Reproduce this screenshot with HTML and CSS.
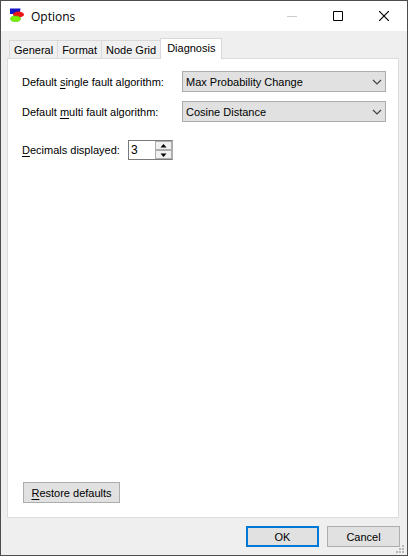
FILE: index.html
```html
<!DOCTYPE html>
<html lang="en">
<head>
<meta charset="UTF-8">
<meta name="viewport" content="width=device-width, initial-scale=1.0">
<title>Options</title>
<link rel="stylesheet" href="styles.css">
</head>
<body>
<div class="window">
    <header class="titlebar">
        <svg class="app-icon" width="16" height="16" viewBox="0 0 16 16">
            <path d="M1 .5H11.5L10.5 6H1Z" fill="#1616c4"/>
            <ellipse cx="9.5" cy="6.5" rx="5.5" ry="3" fill="#f01414"/>
            <ellipse cx="6.5" cy="10.8" rx="5" ry="2.8" fill="#7cf000" stroke="#4fc414" stroke-width=".6"/>
        </svg>
        <h1 class="title">Options</h1>
        <button class="win-btn" type="button" aria-label="Minimize" disabled>
            <svg width="10" height="10" viewBox="0 0 10 10"><path d="M0 5.5H10" stroke="#ccc"/></svg>
        </button>
        <button class="win-btn" type="button" aria-label="Maximize">
            <svg width="10" height="10" viewBox="0 0 10 10"><path d="M.5 .5H9.5V9.5H.5Z" fill="none" stroke="#000"/></svg>
        </button>
        <button class="win-btn" type="button" aria-label="Close">
            <svg width="10" height="10" viewBox="0 0 10 10"><path d="M0 0L10 10M10 0L0 10" stroke="#000" stroke-width="1.2"/></svg>
        </button>
    </header>

    <form class="content">
        <div class="tabs" role="tablist">
            <button class="tab" type="button" role="tab">General</button>
            <button class="tab" type="button" role="tab">Format</button>
            <button class="tab" type="button" role="tab">Node Grid</button>
            <button class="tab active" type="button" role="tab" aria-selected="true">Diagnosis</button>
        </div>

        <div class="panel" role="tabpanel">
            <div class="row">
                <label class="label" for="single">Default <u>s</u>ingle fault algorithm:</label>
                <div class="dropdown">
                    <select id="single">
                        <option>Max Probability Change</option>
                    </select>
                    <svg class="chevron" width="10" height="6" viewBox="0 0 10 6"><path d="M1 1L5 5L9 1" fill="none" stroke="#444" stroke-width="1.2"/></svg>
                </div>
            </div>
            <div class="row">
                <label class="label" for="multi">Default <u>m</u>ulti fault algorithm:</label>
                <div class="dropdown">
                    <select id="multi">
                        <option>Cosine Distance</option>
                    </select>
                    <svg class="chevron" width="10" height="6" viewBox="0 0 10 6"><path d="M1 1L5 5L9 1" fill="none" stroke="#444" stroke-width="1.2"/></svg>
                </div>
            </div>
            <div class="row decimals">
                <label class="label-short" for="decimals"><u>D</u>ecimals displayed:</label>
                <div class="spinner">
                    <input id="decimals" type="number" value="3" min="0">
                    <div class="spin-btns">
                        <button type="button" aria-label="More">
                            <svg width="7" height="4" viewBox="0 0 7 4"><path d="M3.5 0L6.5 3.5H.5Z"/></svg>
                        </button>
                        <button type="button" aria-label="Less">
                            <svg width="7" height="4" viewBox="0 0 7 4"><path d="M.5 .5H6.5L3.5 4Z"/></svg>
                        </button>
                    </div>
                </div>
            </div>
            <button class="btn restore" type="button"><u>R</u>estore defaults</button>
        </div>

        <div class="actions">
            <button class="btn default" type="submit">OK</button>
            <button class="btn" type="button">Cancel</button>
        </div>
    </form>
    <svg class="grip" width="8" height="8" viewBox="0 0 8 8" fill="#b8b8b8">
        <path d="M6 0h2v2h-2zM3 3h2v2h-2zM6 3h2v2h-2zM0 6h2v2h-2zM3 6h2v2h-2zM6 6h2v2h-2z"/>
    </svg>
</div>
</body>
</html>
```
FILE: styles.css
```css
* {
    box-sizing: border-box;
}
body {
    margin: 0;
    font-family: "Liberation Sans", Arial, sans-serif;
    font-size: 11px;
    line-height: 15px;
    color: #000;
}
button, select, input {
    font: inherit;
    color: inherit;
    margin: 0;
    padding: 0;
    border-radius: 0;
}
svg {
    display: block;
}
u {
    text-underline-offset: 2px;
    text-decoration-skip-ink: none;
}
.window {
    position: relative;
    display: flex;
    flex-direction: column;
    min-height: 100vh;
    background: #efefef;
    border: 1px solid #4d4d4d;
}

/* title bar */
.titlebar {
    display: flex;
    align-items: center;
    height: 30px;
    padding-left: 8px;
    background: #fff;
}
.title {
    flex: 1;
    margin: 0 0 0 6px;
    font-family: "Open Sans", sans-serif;
    font-size: 12px;
    font-weight: normal;
}
.win-btn {
    display: flex;
    align-items: center;
    justify-content: center;
    width: 46px;
    height: 30px;
    background: none;
    border: 0;
}

.content {
    flex: 1;
    display: flex;
    flex-direction: column;
    padding: 7px 7px 8px 6px;
}

/* tabs */
.tabs {
    display: flex;
    align-items: flex-end;
    padding-left: 2px;
}
.tab {
    height: 18px;
    padding: 2px 4px 0;
    background: #f0f0f0;
    border: 1px solid #d9d9d9;
    border-right: 0;
    border-bottom: 0;
}
.tab.active {
    z-index: 1;
    height: 21px;
    margin-bottom: -1px;
    padding: 0 6px 1px;
    background: #fff;
    border-right: 1px solid #d9d9d9;
}
.panel {
    flex: 1;
    display: flex;
    flex-direction: column;
    gap: 9px;
    margin-right: 1px;
    padding: 12px 12px 14px 14px;
    background: #fff;
    border: 1px solid #dcdcdc;
}
.row {
    display: flex;
    align-items: center;
}
.label {
    width: 160px;
    padding-top: 2px;
}
.label-short {
    width: 106px;
}
.decimals {
    margin-top: 9px;
}

/* fields */
.dropdown {
    position: relative;
    flex: 1;
}
.dropdown select {
    display: block;
    width: 100%;
    height: 21px;
    padding: 2px 20px 0 3px;
    appearance: none;
    background: #e1e1e1;
    border: 1px solid #adadad;
}
.chevron {
    position: absolute;
    top: 8px;
    right: 4px;
    pointer-events: none;
}
.spinner {
    display: flex;
    width: 45px;
    height: 20px;
    border: 1px solid #7a7a7a;
    border-right-color: #adadad;
}
.spinner input {
    flex: 1;
    min-width: 0;
    padding-left: 2px;
    font-size: 12px;
    border: 0;
    appearance: textfield;
}
.spin-btns {
    display: flex;
    flex-direction: column;
    width: 17px;
    background: #fff;
}
.spin-btns button {
    flex: 1;
    display: flex;
    align-items: center;
    justify-content: center;
    background: #f0f0f0;
    border: 1px solid #adadad;
}

/* buttons */
.btn {
    width: 73px;
    height: 21px;
    padding-top: 1px;
    background: #e1e1e1;
    border: 1px solid #adadad;
}
.btn.default {
    border: 2px solid #0078d7;
}
.btn.restore {
    width: 97px;
    margin-top: auto;
    margin-left: 1px;
}
.actions {
    display: flex;
    justify-content: flex-end;
    gap: 8px;
    margin-top: 8px;
}
.grip {
    position: absolute;
    right: 3px;
    bottom: 2px;
}
```
